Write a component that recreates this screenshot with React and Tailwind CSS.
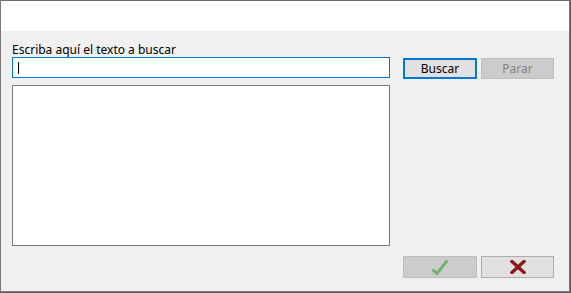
import React, { useState } from 'react';

export default function App() {
  const [query, setQuery] = useState('');

  return (
    <div className="w-[571px] h-[293px] bg-[#5a5a5a]" style={{ fontFamily: '"Noto Sans", "Liberation Sans", sans-serif' }}>
      <div className="w-[570px] h-[292px] border-x border-b border-[#7a7a7a] bg-[#f0f0f0] flex flex-col">
        {/* title bar */}
        <div className="h-[31px] bg-white shrink-0 border-t border-[#6b6b6b]"></div>

        <div className="flex pl-[11px] pt-[11px] gap-[13px]">
          <div className="flex flex-col w-[378px]">
            <label className="text-[12px] leading-[15px] text-black">Escriba aquí el texto a buscar</label>
            <div className="h-[21px] border border-[#0078d7] bg-white flex items-center px-[5px]">
              <input
                value={query}
                onChange={(e) => setQuery(e.target.value)}
                className="w-full text-[12px] outline-none bg-transparent"
              />
              <span className="absolute w-px h-[12px] bg-black"></span>
            </div>
            <div className="mt-[7px] h-[161px] border border-[#7a7a7a] bg-white"></div>
          </div>

          <div className="flex gap-[4px] pt-[16px] h-fit">
            <button className="w-[74px] h-[21px] border-2 border-[#0078d7] bg-[#e1e1e1] text-[12px] leading-none text-black">
              Buscar
            </button>
            <button disabled className="w-[73px] h-[21px] border border-[#bfbfbf] bg-[#cccccc] text-[12px] leading-none text-[#838383]">
              Parar
            </button>
          </div>
        </div>

        <div className="flex gap-[4px] pl-[402px] pt-[10px]">
          <button disabled className="w-[74px] h-[22px] border border-[#bfbfbf] bg-[#cccccc] flex items-center justify-center">
            <svg width="16" height="15" viewBox="0 0 16 15">
              <path d="M1.5 10.5 L5 13.5 L14.5 1.5" fill="none" stroke="#73b173" strokeWidth="3" strokeLinecap="square" />
            </svg>
          </button>
          <button className="w-[73px] h-[22px] border border-[#adadad] bg-[#e1e1e1] flex items-center justify-center">
            <svg width="16" height="14" viewBox="0 0 16 14">
              <path d="M2 1.5 L14 12.5 M14 1.5 L2 12.5" fill="none" stroke="#8c1a1a" strokeWidth="3.4" strokeLinecap="square" />
            </svg>
          </button>
        </div>
      </div>
    </div>
  );
}
